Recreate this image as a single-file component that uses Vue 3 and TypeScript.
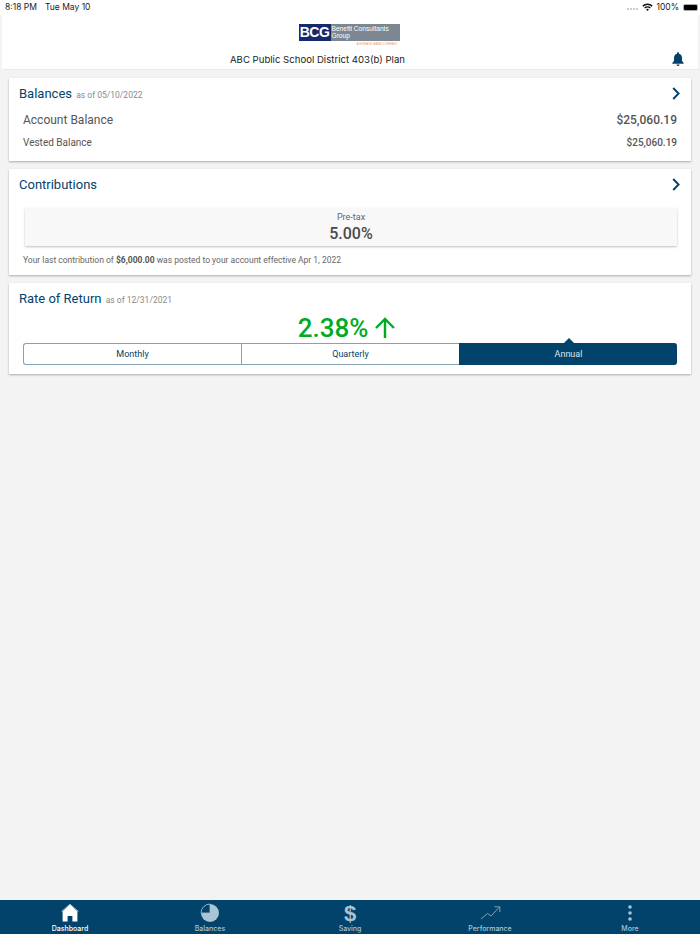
<script setup lang="ts">
interface Tab {
  label: string;
  icon: string;
  active?: boolean;
}

const tabs: Tab[] = [
  { label: 'Dashboard', icon: 'home', active: true },
  { label: 'Balances', icon: 'pie' },
  { label: 'Saving', icon: 'dollar' },
  { label: 'Performance', icon: 'trend' },
  { label: 'More', icon: 'dots' },
];
const periods = ['Monthly', 'Quarterly', 'Annual'];
const activePeriod = 'Annual';
</script>

<template>
  <div class="page">
    <div class="status-bar">
      <div class="status-left"><span>8:18 PM</span><span>Tue May 10</span></div>
      <div class="status-right">
        <span class="signal"><i></i><i></i><i></i><i></i></span>
        <svg class="wifi" width="11" height="8" viewBox="0 0 11 8">
          <path d="M0.3 2.6A7.4 7.4 0 0 1 10.7 2.6L9.6 3.7A5.9 5.9 0 0 0 1.4 3.7Z" fill="#111" />
          <path d="M2.2 4.5A4.7 4.7 0 0 1 8.8 4.5L7.7 5.6A3.2 3.2 0 0 0 3.3 5.6Z" fill="#111" />
          <path d="M4.1 6.4A2 2 0 0 1 6.9 6.4L5.5 7.9Z" fill="#111" />
        </svg>
        <span>100%</span>
        <span class="battery"><i></i></span>
      </div>
    </div>

    <header class="app-header">
      <div class="logo">
        <div class="logo-mark">
          <span class="logo-bcg">BCG</span>
          <span class="logo-name">Benefit Consultants<br />Group</span>
        </div>
        <div class="logo-tag">A HORACE MANN COMPANY</div>
      </div>
      <div class="plan-row">
        <span class="plan-name">ABC Public School District 403(b) Plan</span>
        <svg class="bell" width="12" height="14" viewBox="0 0 12 14">
          <path d="M6 0.2C6.6 0.2 7 0.6 7 1.2V1.7C9 2.2 10 3.9 10 6V8.8L11.7 11V11.8H0.3V11L2 8.8V6C2 3.9 3 2.2 5 1.7V1.2C5 0.6 5.4 0.2 6 0.2Z" fill="#02436b" />
          <path d="M4.5 12.4H7.5A1.5 1.5 0 0 1 4.5 12.4Z" fill="#02436b" />
        </svg>
      </div>
    </header>

    <main class="content">
      <section class="card balances">
        <div class="card-head">
          <h2>Balances <small>as of 05/10/2022</small></h2>
          <svg class="chevron" width="8" height="13" viewBox="0 0 8 13">
            <path d="M1.2 1L6.6 6.5L1.2 12" fill="none" stroke="#02436b" stroke-width="1.9" />
          </svg>
        </div>
        <div class="row row-main"><span>Account Balance</span><strong>$25,060.19</strong></div>
        <div class="row row-sub"><span>Vested Balance</span><strong>$25,060.19</strong></div>
      </section>

      <section class="card contributions">
        <div class="card-head">
          <h2>Contributions</h2>
          <svg class="chevron" width="8" height="13" viewBox="0 0 8 13">
            <path d="M1.2 1L6.6 6.5L1.2 12" fill="none" stroke="#02436b" stroke-width="1.9" />
          </svg>
        </div>
        <div class="rate-box">
          <div class="rate-label">Pre-tax</div>
          <div class="rate-value">5.00%</div>
        </div>
        <p class="note">Your last contribution of <b>$6,000.00</b> was posted to your account effective Apr 1, 2022</p>
      </section>

      <section class="card returns">
        <div class="card-head">
          <h2>Rate of Return <small>as of 12/31/2021</small></h2>
        </div>
        <div class="return-value">
          <span>2.38%</span>
          <svg width="22" height="22" viewBox="0 0 22 22">
            <path d="M11 21V2.5M2 11L11 2L20 11" fill="none" stroke="#00ab22" stroke-width="2.4" />
          </svg>
        </div>
        <div class="segments">
          <div
            v-for="p in periods"
            :key="p"
            class="segment"
            :class="{ selected: p === activePeriod }"
          >{{ p }}</div>
        </div>
      </section>
    </main>

    <nav class="tab-bar">
      <div v-for="t in tabs" :key="t.label" class="tab" :class="{ active: t.active }">
        <svg class="tab-icon" width="24" height="20" viewBox="0 0 24 20">
          <template v-if="t.icon === 'home'">
            <path d="M12 1.5L4.6 8.2V18.5H9.6V13H14.4V18.5H19.4V8.2Z" fill="#fff" />
            <path d="M3.5 8.6L12 1.2L20.5 8.6" fill="none" stroke="#a9c0cf" stroke-width="1" />
          </template>
          <template v-else-if="t.icon === 'pie'">
            <circle cx="12" cy="10" r="9" fill="#a9c4d4" />
            <path d="M12 10V1A9 9 0 0 0 3 10Z" fill="#02436b" stroke="#a9c4d4" stroke-width="0.8" />
          </template>
          <template v-else-if="t.icon === 'dollar'">
            <text x="12" y="18" text-anchor="middle" class="dollar-glyph">$</text>
          </template>
          <template v-else-if="t.icon === 'trend'">
            <path d="M3 16L9.5 10.5L13 13L21 4.5M16.5 3.8H21.8V9" fill="none" stroke="#8fabbd" stroke-width="0.9" />
          </template>
          <template v-else>
            <circle cx="12" cy="4" r="1.8" fill="#a9c4d4" />
            <circle cx="12" cy="10" r="1.8" fill="#a9c4d4" />
            <circle cx="12" cy="16" r="1.8" fill="#a9c4d4" />
          </template>
        </svg>
        <span class="tab-label">{{ t.label }}</span>
      </div>
    </nav>
  </div>
</template>

<style scoped>
.page {
  display: flex;
  flex-direction: column;
  height: 934px;
  background: #f3f3f3;
  font-family: Roboto, "Liberation Sans", sans-serif;
  overflow: hidden;
}

.status-bar {
  display: flex;
  justify-content: space-between;
  align-items: center;
  height: 14px;
  padding: 0 2px 1px 5px;
  background: #fff;
  font-family: Inter, "Liberation Sans", sans-serif;
  font-size: 8.5px;
  color: #222;
}

.status-left {
  display: flex;
  gap: 8px;
}

.status-right {
  display: flex;
  align-items: center;
  gap: 3px;
}

.signal {
  display: flex;
  gap: 1px;
  margin: 4px 1px 0 0;
}

.signal i {
  width: 2px;
  height: 2px;
  border-radius: 50%;
  background: #bbb;
}

.battery {
  display: block;
  width: 15px;
  height: 7px;
  padding: 1px;
  margin-left: 1px;
  border-radius: 2px;
  background: #aaa;
  box-sizing: border-box;
}

.battery i {
  display: block;
  height: 100%;
  border-radius: 1px;
  background: #000;
}

.app-header {
  height: 55px;
  margin: 0 2px;
  background: #fff;
  border-bottom: 1px solid #eaeaea;
  box-sizing: border-box;
}

.logo {
  display: flex;
  flex-direction: column;
  align-items: flex-end;
  width: 101px;
  margin: 0 auto;
  padding-top: 9px;
  transform: translateX(-1px);
}

.logo-mark {
  display: flex;
  width: 101px;
  height: 17px;
  background: #7c8791;
}

.logo-bcg {
  width: 32px;
  background: #16296a;
  color: #fff;
  font-family: "Liberation Sans", sans-serif;
  font-size: 14px;
  font-weight: 700;
  line-height: 17px;
  letter-spacing: -0.5px;
  text-align: center;
}

.logo-name {
  padding: 1px 0 0 1px;
  color: #fff;
  font-family: "Liberation Sans", sans-serif;
  font-size: 6.6px;
  line-height: 7px;
  white-space: nowrap;
}

.logo-tag {
  margin: 1px 2px 0 0;
  color: #e89a70;
  font-family: "Liberation Sans", sans-serif;
  font-size: 3px;
  line-height: 4px;
  white-space: nowrap;
}

.plan-row {
  display: flex;
  justify-content: space-between;
  align-items: center;
  margin-top: 6px;
  padding: 0 14px 0 228px;
}

.plan-name {
  font-family: Inter, "Liberation Sans", sans-serif;
  font-size: 9.6px;
  color: #222;
}

.content {
  display: flex;
  flex-direction: column;
  gap: 8px;
  flex: 1;
  padding: 8px 9px 0;
}

.card {
  background: #fff;
  box-shadow: 0 1px 2px rgba(0, 0, 0, 0.3);
  padding: 0 14px 0 10px;
}

.balances {
  height: 83px;
}

.contributions {
  height: 106px;
}

.returns {
  height: 91px;
}

.card-head {
  display: flex;
  justify-content: space-between;
  align-items: center;
  height: 30px;
}

.chevron {
  margin-right: -3px;
}

h2 {
  margin: 0;
  color: #02436b;
  font-size: 13px;
  font-weight: 400;
}

h2 small {
  margin-left: 1px;
  color: #8a8a8a;
  font-size: 8.5px;
}

.row {
  display: flex;
  justify-content: space-between;
  align-items: center;
  padding-left: 4px;
  color: #555;
}

.row strong {
  font-weight: 500;
}

.row-main {
  height: 24px;
  font-size: 12px;
}

.row-sub {
  height: 20px;
  font-size: 10px;
}

.rate-box {
  margin: 9px 0 0 6px;
  height: 38px;
  background: #f8f8f8;
  box-shadow: 0 1px 2px rgba(0, 0, 0, 0.25);
  text-align: center;
}

.rate-label {
  padding-top: 3px;
  color: #666;
  font-size: 9px;
  line-height: 13px;
}

.rate-value {
  color: #4a4a4a;
  font-size: 16px;
  font-weight: 500;
  line-height: 20px;
}

.note {
  margin: 8px 0 0 4px;
  color: #666;
  font-size: 8.5px;
  line-height: 12px;
}

.note b {
  color: #555;
  font-weight: 700;
}

.return-value {
  display: flex;
  justify-content: center;
  align-items: center;
  gap: 6px;
  height: 30px;
  margin-left: -2px;
  color: #00ab22;
  font-size: 26px;
  font-weight: 500;
}

.segments {
  display: flex;
  height: 22px;
  margin-left: 4px;
  border-radius: 3px;
  box-sizing: border-box;
}

.segment {
  position: relative;
  flex: 1;
  border: 1px solid #86a3b6;
  border-right-width: 0;
  color: #02436b;
  font-size: 9px;
  line-height: 20px;
  text-align: center;
}

.segment:first-child {
  border-radius: 3px 0 0 3px;
}

.segment.selected {
  border-color: #02436b;
  border-radius: 0 3px 3px 0;
  background: #02436b;
  color: #dbe5ec;
}

.segment.selected::before {
  content: "";
  position: absolute;
  top: -6px;
  left: 50%;
  margin-left: -5px;
  border: 5px solid transparent;
  border-top-width: 0;
  border-bottom-color: #02436b;
}

.tab-bar {
  display: flex;
  height: 34px;
  background: #02436b;
}

.tab {
  display: flex;
  flex: 1;
  flex-direction: column;
  align-items: center;
  color: #a9c4d4;
}

.tab.active {
  color: #fff;
}

.tab-icon {
  margin-top: 3px;
}

.tab-label {
  font-family: Inter, "Liberation Sans", sans-serif;
  font-size: 7px;
  font-weight: 500;
  line-height: 11px;
}

.dollar-glyph {
  fill: #a9c4d4;
  font-family: "Liberation Sans", sans-serif;
  font-size: 22px;
  font-weight: 700;
}
</style>
